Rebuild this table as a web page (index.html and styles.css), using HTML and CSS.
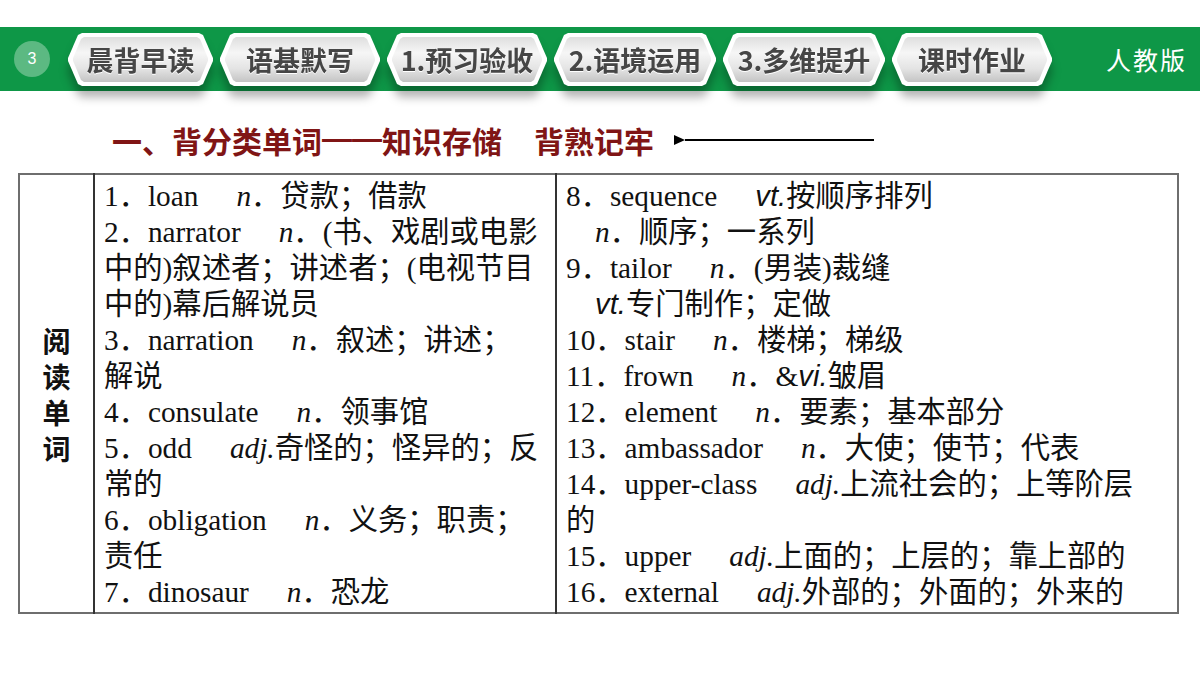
FILE: index.html
```html
<!DOCTYPE html>
<html lang="zh-CN">
<head>
<meta charset="utf-8">
<title>背分类单词</title>
<link rel="stylesheet" href="styles.css">
</head>
<body>
<header class="topbar">
  <div class="page-no">3</div>
  <nav class="tabs">
    <div class="tab tab-narrow"><div class="tab-frame"><div class="tab-face">晨背早读</div></div></div>
    <div class="tab"><div class="tab-frame"><div class="tab-face">语基默写</div></div></div>
    <div class="tab"><div class="tab-frame"><div class="tab-face">1.预习验收</div></div></div>
    <div class="tab tab-wide"><div class="tab-frame"><div class="tab-face">2.语境运用</div></div></div>
    <div class="tab tab-wide"><div class="tab-frame"><div class="tab-face">3.多维提升</div></div></div>
    <div class="tab"><div class="tab-frame"><div class="tab-face">课时作业</div></div></div>
  </nav>
  <div class="edition">人教版</div>
</header>

<main>
  <h2 class="section-title">一、背分类单词<span class="dash">——</span>知识存储<span class="title-gap"></span>背熟记牢<span class="arrow"></span></h2>

  <table class="vocab">
    <colgroup>
      <col class="c1"><col class="c2"><col class="c3">
    </colgroup>
    <tr>
      <td class="label"><span class="label-text">阅读单词</span></td>
      <td class="words">
        <p>1．loan<i class="pos">n</i>．贷款；借款</p>
        <p>2．narrator<i class="pos">n</i>．(书、戏剧或电影<br>中的)叙述者；讲述者；(电视节目<br>中的)幕后解说员</p>
        <p>3．narration<i class="pos">n</i>．叙述；讲述；<br>解说</p>
        <p>4．consulate<i class="pos">n</i>．领事馆</p>
        <p>5．odd<i class="pos">adj.</i>奇怪的；怪异的；反<br>常的</p>
        <p>6．obligation<i class="pos">n</i>．义务；职责；<br>责任</p>
        <p>7．dinosaur<i class="pos">n</i>．恐龙</p>
      </td>
      <td class="words">
        <p>8．sequence<i class="pos sans">vt.</i>按顺序排列</p>
        <p class="cont"><i>n</i>．顺序；一系列</p>
        <p>9．tailor<i class="pos">n</i>．(男装)裁缝</p>
        <p class="cont"><i class="sans">vt.</i>专门制作；定做</p>
        <p>10．stair<i class="pos">n</i>．楼梯；梯级</p>
        <p>11．frown<i class="pos">n</i>．&amp;<i class="sans">vi.</i>皱眉</p>
        <p>12．element<i class="pos">n</i>．要素；基本部分</p>
        <p>13．ambassador<i class="pos">n</i>．大使；使节；代表</p>
        <p>14．upper-class<i class="pos">adj.</i>上流社会的；上等阶层<br>的</p>
        <p>15．upper<i class="pos">adj.</i>上面的；上层的；靠上部的</p>
        <p>16．external<i class="pos">adj.</i>外部的；外面的；外来的</p>
      </td>
    </tr>
  </table>
</main>
</body>
</html>
```

FILE: styles.css
```css
* { box-sizing: border-box; }

body {
  margin: 0;
  background: #fff;
  font-family: "Liberation Serif", "Noto Sans CJK SC", serif;
}

/* ---------- top bar ---------- */
.topbar {
  margin-top: 27px;
  height: 64px;
  background: #0e9747;
  display: flex;
  align-items: center;
  padding-left: 14px;
}

.page-no {
  flex: none;
  width: 36px;
  height: 36px;
  border-radius: 50%;
  background: #5cb982;
  color: #fff;
  font: 16px/1 "Liberation Sans", sans-serif;
  display: flex;
  align-items: center;
  justify-content: center;
  margin-right: 18px;
}

.tabs {
  display: flex;
  gap: 7px;
  margin-top: 1px;
}

.tab {
  width: 160px;
  height: 53px;
  filter: drop-shadow(0 11px 5px rgba(0, 0, 0, 0.3));
}
.tab-narrow { width: 145px; }
.tab-wide { width: 162px; }

.tab-frame {
  height: 100%;
  padding: 4px 5px 4px;
  background: #fff;
  clip-path: polygon(14px 0, calc(100% - 14px) 0, calc(100% - 10px) 2px,
                     100% 47%, 100% 53%,
                     calc(100% - 10px) calc(100% - 2px), calc(100% - 14px) 100%,
                     14px 100%, 10px calc(100% - 2px), 0 53%, 0 47%, 10px 2px);
}

.tab-face {
  height: 100%;
  clip-path: polygon(11px 0, calc(100% - 11px) 0, calc(100% - 8px) 2px,
                     100% 47%, 100% 53%,
                     calc(100% - 8px) calc(100% - 2px), calc(100% - 11px) 100%,
                     11px 100%, 8px calc(100% - 2px), 0 53%, 0 47%, 8px 2px);
  background: linear-gradient(#dedede, #f6f6f6 35%, #e4e4e4 70%, #c4c4c4);
  display: flex;
  align-items: center;
  justify-content: center;
  font: bold 27px/1 "Noto Sans CJK SC", sans-serif;
  color: #464646;
  text-shadow: 0 1px 0 #fff;
}

.edition {
  margin-left: auto;
  margin-right: 13px;
  color: #fff;
  font: 25px/1 "Noto Sans CJK SC", serif;
  letter-spacing: 2px;
}

/* ---------- heading ---------- */
.section-title {
  margin: 29px 0 13px 112px;
  display: flex;
  align-items: center;
  font: bold 30px/40px "Noto Sans CJK SC", sans-serif;
  color: #801515;
}

.dash {
  font-family: "Liberation Sans", sans-serif;
  position: relative;
  top: -1px;
}

.title-gap {
  display: inline-block;
  width: 32px;
}

.arrow {
  display: flex;
  align-items: center;
  width: 200px;
  margin-left: 20px;
}
.arrow::before {
  content: "";
  border-left: 11px solid #000;
  border-top: 5px solid transparent;
  border-bottom: 5px solid transparent;
}
.arrow::after {
  content: "";
  flex: 1;
  height: 2px;
  background: #000;
}

/* ---------- table ---------- */
.vocab {
  margin-left: 18px;
  width: 1159px;
  table-layout: fixed;
  border-collapse: collapse;
  border: 2px solid #6e6e6e;
  color: #111;
  font-size: 29.3px;
  line-height: 36px;
}

.c1 { width: 75px; }
.c2 { width: 462px; }
.c3 { width: 622px; }

.vocab td {
  vertical-align: top;
  border-left: 2px solid #333;
  padding: 3px 4px 2px 9px;
}

.vocab td.label {
  vertical-align: middle;
  text-align: center;
  padding: 0;
  border-left: 2px solid #6e6e6e;
}

.label-text {
  display: block;
  width: 1em;
  margin: 0 auto;
  font: bold 28px/36px "Noto Sans CJK SC", sans-serif;
  color: #111;
}

.words p {
  margin: 0;
  white-space: nowrap;
}

.words p.cont { padding-left: 29px; }

.pos { margin-left: 38px; }

.sans {
  font-family: "Liberation Sans", sans-serif;
  font-style: italic;
}
```
